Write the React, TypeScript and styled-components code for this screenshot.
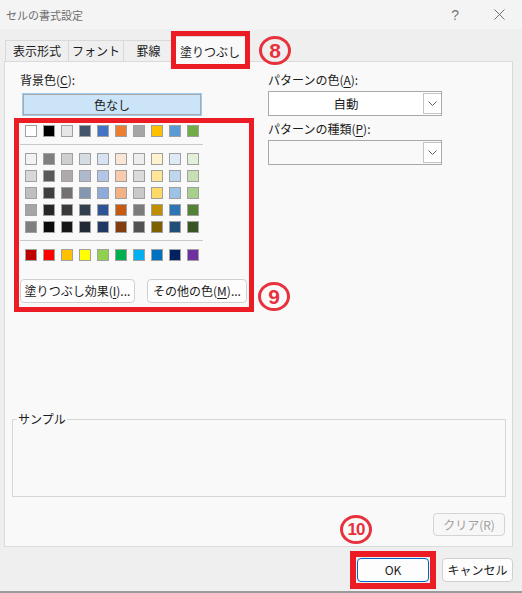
import styled, { createGlobalStyle } from 'styled-components'

const GlobalStyle = createGlobalStyle`
    html, body {
        margin: 0;
        padding: 0;
        background: #efefef;
    }
    * {
        box-sizing: border-box;
    }
`

const themeRow = ['#FFFFFF', '#000000', '#E7E6E6', '#44546A', '#4472C4', '#ED7D31', '#A5A5A5', '#FFC000', '#5B9BD5', '#70AD47']

const tintRows = [
    ['#F2F2F2', '#7F7F7F', '#D0CECE', '#D6DCE4', '#D9E2F3', '#FBE5D5', '#EDEDED', '#FFF2CC', '#DEEBF6', '#E2EFD9'],
    ['#D8D8D8', '#595959', '#AEAAAA', '#ADB9CA', '#B4C6E7', '#F7CBAC', '#DBDBDB', '#FEE599', '#BDD7EE', '#C5E0B3'],
    ['#BFBFBF', '#3F3F3F', '#757070', '#8496B0', '#8EAADB', '#F4B183', '#C9C9C9', '#FFD965', '#9CC3E5', '#A8D08D'],
    ['#A5A5A5', '#262626', '#3A3838', '#323F4F', '#2F5496', '#C55A11', '#7B7B7B', '#BF8F00', '#2E75B5', '#538135'],
    ['#7F7F7F', '#0C0C0C', '#171616', '#222A35', '#1F3864', '#833C0B', '#525252', '#7F6000', '#1E4E79', '#375623'],
]

const standardRow = ['#C00000', '#FF0000', '#FFC000', '#FFFF00', '#92D050', '#00B050', '#00B0F0', '#0070C0', '#002060', '#7030A0']

const Chevron = () => (
    <svg width="9" height="5" viewBox="0 0 9 5">
        <polyline points="0.5,0.5 4.5,4.5 8.5,0.5" fill="none" stroke="#606060" strokeWidth="1" />
    </svg>
)

export default function App() {
    return (
        <Window>
            <GlobalStyle />
            <TitleBar>
                <Title>セルの書式設定</Title>
                <TitleButtons>
                    <HelpGlyph>?</HelpGlyph>
                    <svg width="11" height="11" viewBox="0 0 11 11">
                        <path d="M0.5 0.5 L10.5 10.5 M10.5 0.5 L0.5 10.5" stroke="#707070" strokeWidth="1" />
                    </svg>
                </TitleButtons>
            </TitleBar>

            <TabRow>
                <Tab $w={64}>表示形式</Tab>
                <Tab $w={56}>フォント</Tab>
                <Tab $w={51}>罫線</Tab>
                <ActiveTab>
                    塗りつぶし
                    <Marker $left={85} $top={-1}>8</Marker>
                </ActiveTab>
            </TabRow>

            <Panel>
                <TopRow>
                    <LeftCol>
                        <Label $indent={6}>
                            背景色(<u>C</u>):
                        </Label>
                        <NoColorButton>色なし</NoColorButton>
                        <Highlight>
                            <SwatchGrid>
                                {themeRow.map((c) => (
                                    <Swatch key={c} $c={c} />
                                ))}
                            </SwatchGrid>
                            <Separator />
                            <SwatchGrid>
                                {tintRows.flat().map((c, i) => (
                                    <Swatch key={i} $c={c} />
                                ))}
                            </SwatchGrid>
                            <Separator />
                            <SwatchGrid>
                                {standardRow.map((c) => (
                                    <Swatch key={c} $c={c} />
                                ))}
                            </SwatchGrid>
                            <ButtonRow>
                                <SmallButton $w={115}>
                                    塗りつぶし効果(<u>I</u>)...
                                </SmallButton>
                                <SmallButton $w={100}>
                                    その他の色(<u>M</u>)...
                                </SmallButton>
                            </ButtonRow>
                            <Marker $left={239} $top={159}>9</Marker>
                        </Highlight>
                    </LeftCol>

                    <RightCol>
                        <Label>
                            パターンの色(<u>A</u>):
                        </Label>
                        <Select>
                            <SelectValue>自動</SelectValue>
                            <ArrowBox>
                                <Chevron />
                            </ArrowBox>
                        </Select>
                        <Label $gap={5}>
                            パターンの種類(<u>P</u>):
                        </Label>
                        <Select $disabled>
                            <SelectValue />
                            <ArrowBox>
                                <Chevron />
                            </ArrowBox>
                        </Select>
                    </RightCol>
                </TopRow>

                <Sample>
                    <SampleLegend>サンプル</SampleLegend>
                    <SampleArea />
                </Sample>

                <ClearRow>
                    <ClearButton>クリア(R)</ClearButton>
                </ClearRow>
            </Panel>

            <Footer>
                <OkHighlight>
                    <OkButton>OK</OkButton>
                    <Marker $left={-16} $top={-42} $narrow>
                        10
                    </Marker>
                </OkHighlight>
                <DialogButton>キャンセル</DialogButton>
            </Footer>
            <BottomEdge />
        </Window>
    )
}

const Window = styled.div`
    width: 522px;
    height: 593px;
    overflow: hidden;
    display: flex;
    flex-direction: column;
    background: #efefef;
    font-family: 'Noto Sans CJK JP', 'Liberation Sans', sans-serif;
    font-size: 12px;
    color: #1b1b1b;
`

const TitleBar = styled.header`
    height: 29px;
    flex-shrink: 0;
    display: flex;
    align-items: center;
    justify-content: space-between;
    padding: 0 17px 0 6px;
    background: #f4f4f4;
`

const Title = styled.span`
    font-size: 11px;
    line-height: 14px;
    color: #6e6e6e;
`

const TitleButtons = styled.div`
    display: flex;
    align-items: center;
    gap: 35px;
`

const HelpGlyph = styled.span`
    font-family: 'Liberation Sans', sans-serif;
    font-size: 14px;
    line-height: 14px;
    color: #777;
`

const TabRow = styled.nav`
    height: 32px;
    flex-shrink: 0;
    display: flex;
    align-items: flex-end;
    padding-left: 5px;
    position: relative;
    z-index: 2;
`

const Tab = styled.div<{ $w: number }>`
    width: ${(p) => p.$w}px;
    height: 21px;
    margin-right: -1px;
    border: 1px solid #d9d9d9;
    border-bottom: none;
    text-align: center;
    line-height: 19px;
    white-space: nowrap;
`

const ActiveTab = styled.div`
    position: relative;
    width: 74px;
    height: 26px;
    margin-bottom: -1px;
    padding-top: 6px;
    background: #f9f9f9;
    border: 1px solid #d9d9d9;
    border-bottom: none;
    text-align: center;
    line-height: 17px;
    white-space: nowrap;

    &::after {
        content: '';
        position: absolute;
        top: -6px;
        bottom: -7px;
        left: -3px;
        right: -4px;
        border: 5px solid #ec1c24;
    }
`

const Marker = styled.span<{ $left: number; $top: number; $narrow?: boolean }>`
    position: absolute;
    left: ${(p) => p.$left}px;
    top: ${(p) => p.$top}px;
    width: 32px;
    height: 29px;
    border: 3px solid #e8313c;
    border-radius: 50%;
    display: flex;
    align-items: center;
    justify-content: center;
    font-family: 'Liberation Sans', sans-serif;
    font-weight: 700;
    font-size: ${(p) => (p.$narrow ? 17 : 21)}px;
    letter-spacing: ${(p) => (p.$narrow ? -1 : 0)}px;
    line-height: 1;
    color: #e8313c;
    z-index: 3;
`

const Panel = styled.section`
    position: relative;
    margin-left: 4px;
    width: 509px;
    height: 486px;
    flex-shrink: 0;
    padding: 10px 0 0 9px;
    background: #f9f9f9;
    border: 1px solid #dadada;
`

const TopRow = styled.div`
    display: flex;
    gap: 14px;
    align-items: flex-start;
`

const LeftCol = styled.div`
    width: 240px;
    display: flex;
    flex-direction: column;
`

const RightCol = styled.div`
    width: 174px;
    display: flex;
    flex-direction: column;
`

const Label = styled.div<{ $indent?: number; $gap?: number }>`
    height: 16px;
    line-height: 16px;
    margin-left: ${(p) => p.$indent ?? 0}px;
    margin-top: ${(p) => p.$gap ?? 0}px;
    white-space: nowrap;

    u {
        text-underline-offset: 2px;
    }
`

const NoColorButton = styled.div`
    margin: 5px 0 0 8px;
    width: 180px;
    height: 23px;
    line-height: 21px;
    text-align: center;
    background: #cce4f7;
    border: 1px solid #9fcbf0;
    box-shadow: inset 0 0 0 1px #a9a9a9;
`

const Highlight = styled.div`
    position: relative;
    margin-top: 2px;
    width: 240px;
    border: 5px solid #ec1c24;
    padding: 2px 0 4px 6px;
`

const SwatchGrid = styled.div`
    display: grid;
    grid-template-columns: repeat(10, 12px);
    column-gap: 6px;
    row-gap: 5px;
`

const Swatch = styled.span<{ $c: string }>`
    width: 12px;
    height: 12px;
    background: ${(p) => p.$c};
    border: 1px solid #a0a0a0;
`

const Separator = styled.hr`
    margin: 7px 0 8px -5px;
    width: 183px;
    height: 1px;
    border: none;
    background: #c9c9c9;
`

const ButtonRow = styled.div`
    display: flex;
    gap: 12px;
    margin: 18px 0 0 -5px;
`

const SmallButton = styled.div<{ $w: number }>`
    width: ${(p) => p.$w}px;
    height: 24px;
    line-height: 22px;
    text-align: center;
    white-space: nowrap;
    background: #fdfdfd;
    border: 1px solid #d0d0d0;
    border-radius: 4px;

    u {
        text-underline-offset: 2px;
    }
`

const Select = styled.div<{ $disabled?: boolean }>`
    margin-top: 3px;
    height: 25px;
    display: flex;
    align-items: stretch;
    background: ${(p) => (p.$disabled ? '#f9f9f9' : '#ffffff')};
    border: 1px solid #a9a9a9;
`

const SelectValue = styled.div`
    flex: 1;
    text-align: center;
    line-height: 23px;
    font-size: 12.5px;
`

const ArrowBox = styled.div`
    width: 18px;
    margin: 1px 0;
    display: flex;
    align-items: center;
    justify-content: center;
    background: #ffffff;
    border: 1px solid #c4c4c4;
    border-right: none;
`

const Sample = styled.fieldset`
    margin: 99px 0 0 -2px;
    padding: 0;
    width: 494px;
    border: 1px solid #d6d6d6;
`

const SampleLegend = styled.legend`
    margin-left: 4px;
    padding: 0 1px;
    line-height: 16px;
`

const SampleArea = styled.div`
    height: 69px;
`

const ClearRow = styled.div`
    display: flex;
    justify-content: flex-end;
    padding-right: 7px;
    margin-top: 16px;
`

const ClearButton = styled.div`
    width: 72px;
    height: 23px;
    line-height: 21px;
    text-align: center;
    color: #a0a0a0;
    background: #f7f7f7;
    border: 1px solid #d4d4d4;
    border-radius: 4px;
`

const Footer = styled.footer`
    flex: 1;
    display: flex;
    justify-content: flex-end;
    align-items: flex-start;
    gap: 6px;
    padding: 4px 9px 0 0;
`

const OkHighlight = styled.div`
    position: relative;
    border: 6px solid #ec1c24;
    padding: 1px;
`

const DialogButton = styled.div`
    margin-top: 7px;
    width: 71px;
    height: 24px;
    line-height: 22px;
    text-align: center;
    background: #fdfdfd;
    border: 1px solid #d0d0d0;
    border-radius: 4px;
`

const OkButton = styled(DialogButton)`
    margin-top: 0;
    width: 72px;
    border-color: #0067c0;
`

const BottomEdge = styled.div`
    height: 2px;
    flex-shrink: 0;
    background: #9b9b9b;
`
